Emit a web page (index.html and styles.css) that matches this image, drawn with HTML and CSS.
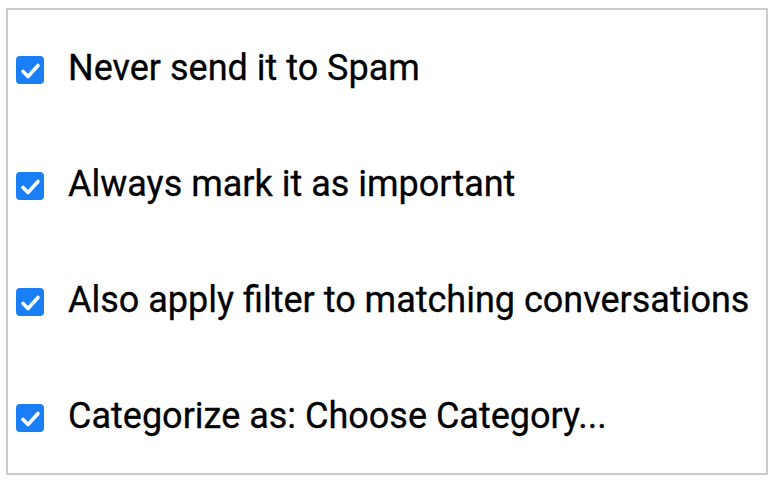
FILE: index.html
```html
<!DOCTYPE html>
<html lang="en">
<head>
<meta charset="utf-8">
<title>Filter options</title>
<link rel="stylesheet" href="styles.css">
</head>
<body>
<div class="panel">
  <label class="row">
    <span class="box"><svg viewBox="0 0 28 28" width="28" height="28"><path d="M7 15.5 L12 20.5 L22 9.5" fill="none" stroke="#fff" stroke-width="3.6" stroke-linecap="round" stroke-linejoin="round"/></svg></span>
    <span class="text">Never send it to Spam</span>
  </label>
  <label class="row">
    <span class="box"><svg viewBox="0 0 28 28" width="28" height="28"><path d="M7 15.5 L12 20.5 L22 9.5" fill="none" stroke="#fff" stroke-width="3.6" stroke-linecap="round" stroke-linejoin="round"/></svg></span>
    <span class="text">Always mark it as important</span>
  </label>
  <label class="row">
    <span class="box"><svg viewBox="0 0 28 28" width="28" height="28"><path d="M7 15.5 L12 20.5 L22 9.5" fill="none" stroke="#fff" stroke-width="3.6" stroke-linecap="round" stroke-linejoin="round"/></svg></span>
    <span class="text">Also apply filter to matching conversations</span>
  </label>
  <label class="row">
    <span class="box"><svg viewBox="0 0 28 28" width="28" height="28"><path d="M7 15.5 L12 20.5 L22 9.5" fill="none" stroke="#fff" stroke-width="3.6" stroke-linecap="round" stroke-linejoin="round"/></svg></span>
    <span class="text">Categorize as: Choose Category...</span>
  </label>
</div>
</body>
</html>
```
FILE: styles.css
```css
html, body {
  margin: 0;
  padding: 0;
  background: #fff;
}
body {
  padding: 8px 6px 0 6px;
  font-family: Roboto, "Liberation Sans", Arial, sans-serif;
  color: #000;
}
.panel {
  box-sizing: border-box;
  width: 762px;
  height: 467px;
  border: 2px solid #cbcbcb;
  display: flex;
  flex-direction: column;
  gap: 76px;
  padding: 40px 0 0 8px;
}
.row {
  display: flex;
  align-items: center;
  height: 40px;
  gap: 24px;
}
.box {
  width: 28px;
  height: 28px;
  border-radius: 4px;
  background: #1a7ff6;
  display: flex;
  flex: none;
}
.text {
  font-size: 36px;
  line-height: 40px;
  margin-bottom: 4px;
  white-space: nowrap;
  -webkit-text-stroke: 0.3px #000;
}
```
